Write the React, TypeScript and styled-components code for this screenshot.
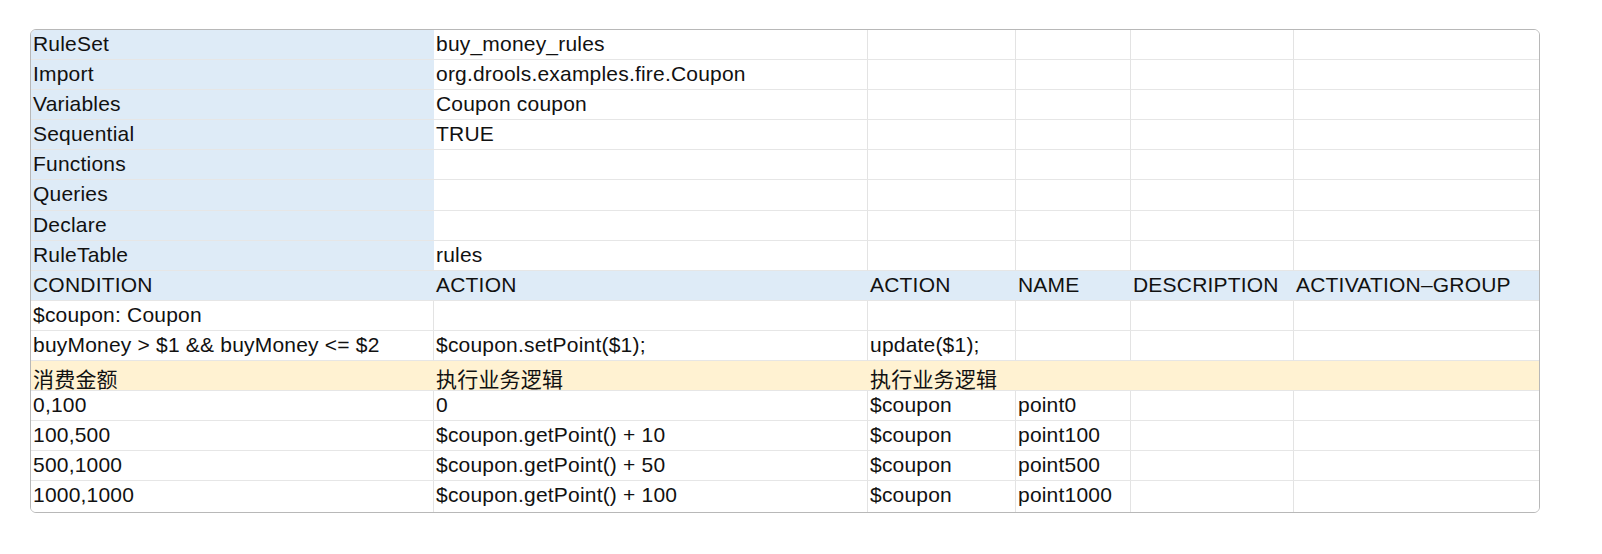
import React from 'react';
import styled, { createGlobalStyle } from 'styled-components';

const Global = createGlobalStyle`
  body {
    margin: 0;
    background: #ffffff;
    font-family: 'Liberation Sans', 'Noto Sans CJK SC', sans-serif;
  }
`;

const Page = styled.div`
  padding: 29px 0 0 30px;
`;

const Sheet = styled.div`
  width: 1508px;
  display: grid;
  grid-template-columns: 403px 434px 148px 115px 163px 245px;
  grid-auto-rows: 30.1px;
  border: 1px solid #b8b8b8;
  border-radius: 6px;
  overflow: hidden;
`;

type Fill = 'none' | 'blue' | 'yellow';

const fillColor: Record<Fill, string> = {
  none: '#ffffff',
  blue: '#deebf7',
  yellow: '#fff2d2',
};

const Cell = styled.div<{ $fill: Fill; $last: boolean; $bottom: boolean }>`
  background: ${(p) => fillColor[p.$fill]};
  border-right: ${(p) => (p.$last || p.$fill !== 'none' ? 'none' : '1px solid #e3e3e3')};
  border-bottom: ${(p) => (p.$bottom ? 'none' : '1px solid #e6e6e6')};
  padding: 2px 0 0 2px;
  font-size: 21px;
  letter-spacing: 0.2px;
  color: #111;
  white-space: nowrap;
  overflow: hidden;
  box-sizing: border-box;
`;

const rows: string[][] = [
  ['RuleSet', 'buy_money_rules'],
  ['Import', 'org.drools.examples.fire.Coupon'],
  ['Variables', 'Coupon coupon'],
  ['Sequential', 'TRUE'],
  ['Functions'],
  ['Queries'],
  ['Declare'],
  ['RuleTable', 'rules'],
  ['CONDITION', 'ACTION', 'ACTION', 'NAME', 'DESCRIPTION', 'ACTIVATION\u2013GROUP'],
  ['$coupon: Coupon'],
  ['buyMoney > $1 && buyMoney <= $2', '$coupon.setPoint($1);', 'update($1);'],
  ['消费金额', '执行业务逻辑', '执行业务逻辑'],
  ['0,100', '0', '$coupon', 'point0'],
  ['100,500', '$coupon.getPoint() + 10', '$coupon', 'point100'],
  ['500,1000', '$coupon.getPoint() + 50', '$coupon', 'point500'],
  ['1000,1000', '$coupon.getPoint() + 100', '$coupon', 'point1000'],
];

const fillFor = (r: number, c: number): Fill => {
  if (r === 8) return 'blue';
  if (r === 11) return 'yellow';
  if (r < 8 && c === 0) return 'blue';
  return 'none';
};

const App: React.FC = () => {
  return (
    <Page>
      <Global />
      <Sheet>
        {rows.map((row, r) =>
          [0, 1, 2, 3, 4, 5].map((c) => (
            <Cell
              key={`${r}-${c}`}
              $fill={fillFor(r, c)}
              $last={c === 5}
              $bottom={r === rows.length - 1}
            >
              {row[c] ?? ''}
            </Cell>
          ))
        )}
      </Sheet>
    </Page>
  );
};

export default App;
